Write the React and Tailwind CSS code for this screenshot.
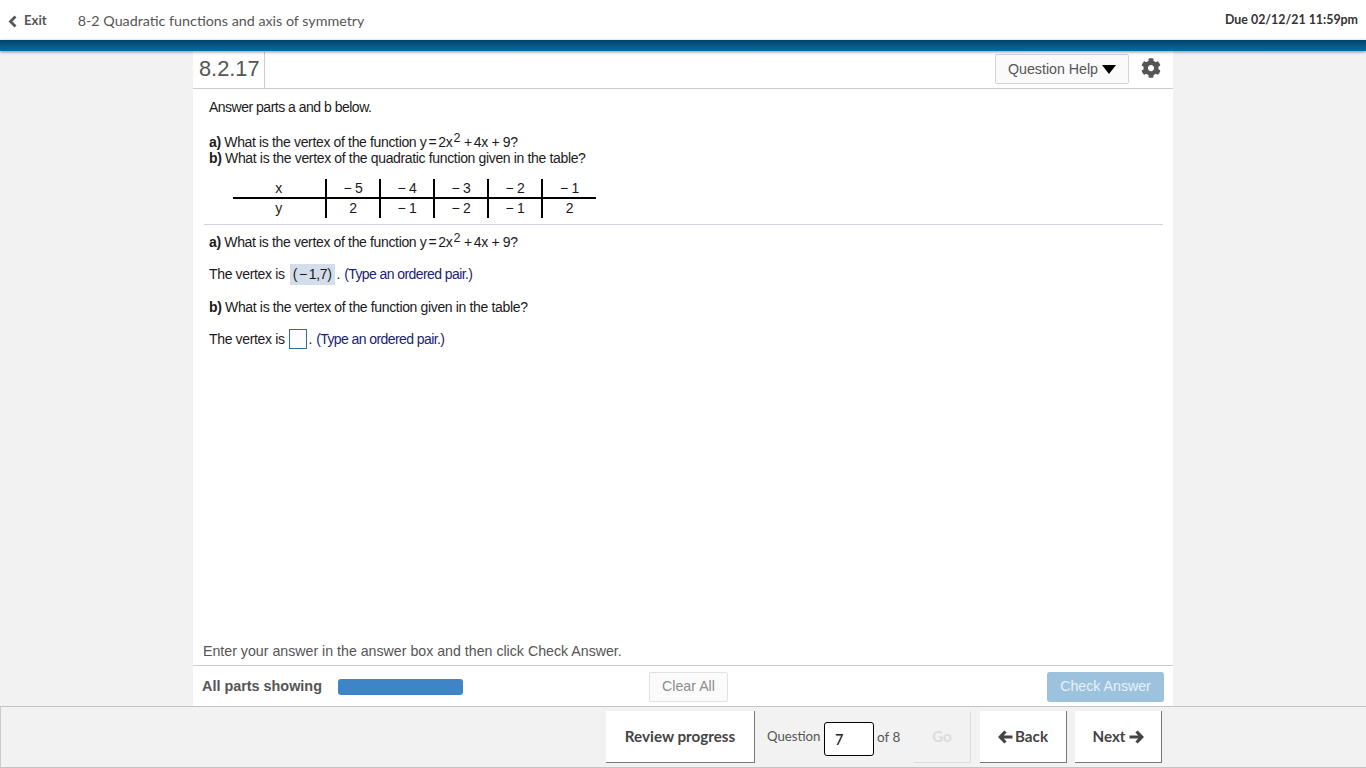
import React from "react";
import { FaCog } from "react-icons/fa";

function Line({ children, className = "" }) {
  return <div className={`h-4 leading-4 whitespace-nowrap ${className}`}>{children}</div>;
}

function Func() {
  return (
    <>
      <b>a)</b> What is the vertex of the function y<span className="mx-[2px]">=</span>2x<span className="text-[12.5px] leading-none inline-block -translate-y-[5px] ml-[1px] mr-[4px]">2</span>+<span className="ml-[2px]">4x</span> + 9?
    </>
  );
}

const rows = [
  ["x", "−5", "−4", "−3", "−2", "−1"],
  ["y", "2", "−1", "−2", "−1", "2"],
];

function Table() {
  return (
    <div className="ml-[40px] mt-[13px] w-[363px] text-[14px] tracking-[-0.35px]">
      {rows.map((r, i) => (
        <div key={i} className={`flex leading-[19px] ${i === 0 ? "border-b-2 border-black h-[20px]" : "h-[19px]"}`}>
          {r.map((c, j) => (
            <div key={j} className={`text-center ${j === 0 ? "w-[92px] pr-[1px]" : j === 5 ? "w-[55px] border-l-2 border-black" : "w-[54px] border-l-2 border-black"}`}>
              {c.startsWith("−") ? c.replace("−", "− ") : c}
            </div>
          ))}
        </div>
      ))}
    </div>
  );
}

function Arrow({ dir }) {
  return (
    <svg width="15" height="14" viewBox="0 0 15 14" className={dir === "right" ? "ml-[3px] -scale-x-100" : "mr-[2px]"}>
      <path d="M7.5 1.5 2.2 7l5.3 5.5M3 7h11.5" fill="none" stroke="#444" strokeWidth="3.2" />
    </svg>
  );
}

export default function App() {
  return (
    <div className="w-[1366px] h-[768px] overflow-hidden flex flex-col bg-[#f2f2f2] font-['Liberation_Sans',sans-serif]">
      <header className="h-10 shrink-0 bg-white flex items-center justify-between font-['Lato',sans-serif] pl-[8px] pr-[8px] pt-[2px]">
        <div className="flex items-center">
          <svg width="9" height="13" viewBox="0 0 9 13">
            <path d="M7.5 1.5 2.5 6.5l5 5" fill="none" stroke="#555" strokeWidth="2.8" />
          </svg>
          <span className="ml-[7px] font-bold text-[13.2px] text-[#555]">Exit</span>
          <span className="ml-[31px] text-[14.3px] text-[#555]">8-2 Quadratic functions and axis of symmetry</span>
        </div>
        <span className="font-bold text-[12.4px] text-[#333] -mt-[1px]">Due 02/12/21 11:59pm</span>
      </header>
      <div className="h-[11px] shrink-0 bg-gradient-to-b from-[#014368] to-[#0a6aa3] shadow-[0_1px_3px_rgba(0,0,0,0.45)] relative" />
      <main className="w-[980px] h-[655px] ml-[193px] bg-white flex flex-col shrink-0">
        <div className="h-[38px] shrink-0 border-b border-[#cccccc] flex items-center justify-between">
          <div className="h-[36px] w-[72px] border-r border-[#cccccc] pl-[6px] text-[21.8px] leading-[33px] text-[#555]">8.2.17</div>
          <div className="flex items-center mr-[12px] -mt-[1px]">
            <div className="w-[134px] h-[30px] border border-[#d4d4d4] rounded-[2px] bg-[#fafafa] flex items-center justify-center text-[#555] text-[14.2px] pt-[1px]">
              Question Help
              <svg className="ml-[4px]" width="14" height="9" viewBox="0 0 14 9"><path d="M0 0H14L7 9Z" fill="#000" /></svg>
            </div>
            <FaCog className="ml-[12px] w-[20px] h-[20px] text-[#555] -mt-[2px]" />
          </div>
        </div>
        <div className="flex-1 text-[14px] text-[#1a1a1a] tracking-[-0.35px]">
          <div className="pl-[16px] pt-[10px]">
            <Line className="tracking-[-0.5px]">Answer parts a and b below.</Line>
            <Line className="mt-[19px]"><Func /></Line>
            <Line><b>b)</b> What is the vertex of the quadratic function given in the table?</Line>
          </div>
          <Table />
          <div className="h-px bg-[#d3d3dd] ml-[11px] mr-[10px] mt-[6px]" />
          <div className="pl-[16px] pt-[9px]">
            <Line><Func /></Line>
            <Line className="mt-[16px] flex items-center">
              The vertex is
              <span className="ml-[5px] h-[21px] w-[45px] bg-[#d4deeb] flex items-center justify-center">(<span className="mx-[2px]">−</span>1,7)</span>
              <span className="ml-[2px]">.</span>
              <span className="ml-[4px] text-[#1a2373] tracking-[-0.58px]">(Type an ordered pair.)</span>
            </Line>
            <Line className="mt-[17px]"><b>b)</b> What is the vertex of the function given in the table?</Line>
            <Line className="mt-[16px] flex items-center">
              The vertex is
              <span className="ml-[4px] w-[18px] h-[20px] border border-[#2d6f8f] bg-white" />
              <span className="ml-[2px]">.</span>
              <span className="ml-[4px] text-[#1a2373] tracking-[-0.58px]">(Type an ordered pair.)</span>
            </Line>
          </div>
        </div>
        <div className="h-[27px] shrink-0 pl-[10px] text-[14.2px] leading-[27px] text-[#555]">Enter your answer in the answer box and then click Check Answer.</div>
        <div className="h-[41px] shrink-0 border-t border-[#cccccc] flex items-center pl-[9px] pr-[9px] pt-[2px]">
          <b className="w-[136px] text-[14.4px] text-[#555]">All parts showing</b>
          <div className="w-[125px] h-[16px] rounded-[3px] bg-[#3d85c6] -mt-[1px]" />
          <div className="ml-[186px] w-[79px] h-[30px] border border-[#e2e2e2] rounded-[2px] bg-[#fbfbfb] flex items-center justify-center text-[14.2px] text-[#8c8c8c]">Clear All</div>
          <div className="ml-auto w-[117px] h-[30px] rounded-[3px] bg-[#9dc2de] flex items-center justify-center text-[14.2px] text-[#e8f1f8]">Check Answer</div>
        </div>
      </main>
      <footer className="flex-1 border-y border-[#c4c4c4] border-l border-l-[#cccccc] flex justify-end pr-[204px] font-['Lato',sans-serif] text-[#444]">
        <div className="mt-[4px] w-[149px] h-[52px] bg-white border-b border-r border-[#777] flex items-center justify-center font-bold text-[15.2px] text-[#444]">Review progress</div>
        <div className="flex items-center h-[52px] mt-[4px]">
          <span className="ml-[12px] w-[53px] text-[13.2px] text-[#555] whitespace-nowrap">Question</span>
          <span className="ml-[4px] mt-[4px] w-[50px] h-[34px] border border-black rounded-[3px] bg-white flex items-center pl-[10px] pt-[2px] text-[14.5px] font-medium text-[#222]">7</span>
          <span className="ml-[3px] w-[23px] text-[13.5px] text-[#555] whitespace-nowrap">of 8</span>
        </div>
        <div className="ml-[14px] mt-[4px] w-[57px] h-[52px] bg-[#f2f2f2] border-b border-r border-[#dddddd] flex items-center justify-center font-bold text-[15px] text-[#dcdcdc]">Go</div>
        <div className="ml-[9px] mt-[4px] w-[87px] h-[52px] bg-white border-b border-r border-[#777] flex items-center justify-center font-bold text-[15.2px] text-[#444]">
          <Arrow dir="left" />Back
        </div>
        <div className="ml-[8px] mt-[4px] w-[87px] h-[52px] bg-white border-b border-r border-[#777] flex items-center justify-center font-bold text-[15.2px] text-[#444]">
          Next<Arrow dir="right" />
        </div>
      </footer>
    </div>
  );
}
